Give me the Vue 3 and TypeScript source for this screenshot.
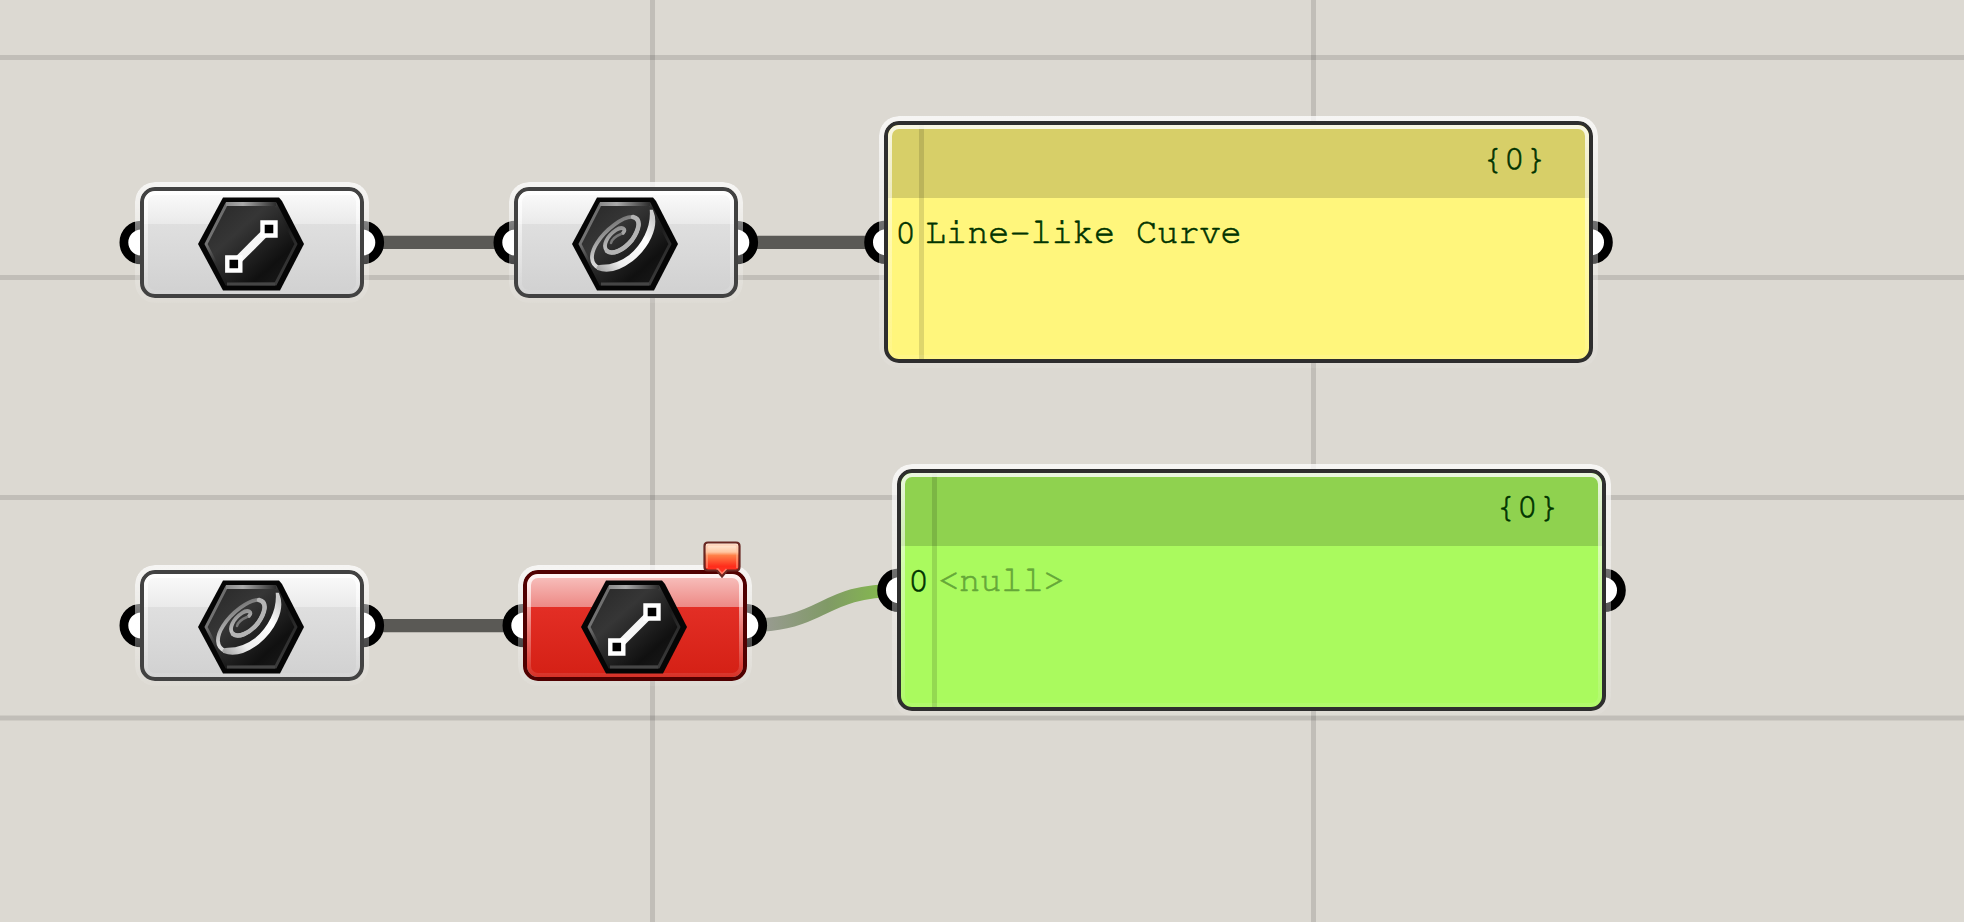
<script setup lang="ts">
interface Port { x: number; y: number }
interface ParamNode { x: number; y: number; icon: 'line' | 'curve'; error: boolean }
interface Panel { x: number; y: number; tone: 'yellow' | 'green'; path: string; index: number; value: string; empty: boolean }

const verticals: number[] = [650, 1311]
const horizontals: number[] = [55, 275, 495, 715.5]

const nodes: ParamNode[] = [
  { x: 140, y: 187, icon: 'line', error: false },
  { x: 514, y: 187, icon: 'curve', error: false },
  { x: 140, y: 570, icon: 'curve', error: false },
  { x: 523, y: 570, icon: 'line', error: true },
]
const panels: Panel[] = [
  { x: 884, y: 121, tone: 'yellow', path: '{0}', index: 0, value: 'Line-like Curve', empty: false },
  { x: 897, y: 469, tone: 'green', path: '{0}', index: 0, value: '<null>', empty: true },
]
const ports: Port[] = [
  ...nodes.flatMap((n) => [{ x: n.x + 1.3, y: n.y + 55.5 }, { x: n.x + 222.3, y: n.y + 55.5 }]),
  ...panels.flatMap((p) => [{ x: p.x + 2, y: p.y + 121.3 }, { x: p.x + 707, y: p.y + 121.3 }]),
]
const at = (item: Port) => ({ left: item.x + 'px', top: item.y + 'px' })
</script>

<template>
  <main class="canvas">
    <svg class="wires" width="1964" height="922" viewBox="0 0 1964 922">
      <defs>
        <linearGradient id="wire" gradientUnits="userSpaceOnUse" x1="766" y1="0" x2="878" y2="0">
          <stop offset="0" stop-color="#989b90" />
          <stop offset="0.55" stop-color="#809a66" />
          <stop offset="1" stop-color="#84b650" />
        </linearGradient>
        <linearGradient id="hexFill" x1="0" y1="0" x2="1" y2="1">
          <stop offset="0.1" stop-color="#2b2b2b" />
          <stop offset="0.35" stop-color="#363636" />
          <stop offset="0.75" stop-color="#101010" />
          <stop offset="1" stop-color="#1c1c1c" />
        </linearGradient>
        <linearGradient id="bevel" x1="0" y1="0" x2="1" y2="1">
          <stop offset="0" stop-color="#666" />
          <stop offset="0.25" stop-color="#747474" />
          <stop offset="0.42" stop-color="#303030" />
          <stop offset="0.6" stop-color="#1c1c1c" />
          <stop offset="1" stop-color="#464646" />
        </linearGradient>
        <linearGradient id="topShine" gradientUnits="userSpaceOnUse" x1="27" y1="0" x2="78" y2="0">
          <stop offset="0" stop-color="#888" />
          <stop offset="0.35" stop-color="#aaa" />
          <stop offset="1" stop-color="#2c2c2c" />
        </linearGradient>
        <linearGradient id="swirlOuter" gradientUnits="userSpaceOnUse" x1="20" y1="70" x2="80" y2="20">
          <stop offset="0" stop-color="#999" />
          <stop offset="0.3" stop-color="#eee" />
          <stop offset="0.75" stop-color="#fff" />
          <stop offset="1" stop-color="#ccc" />
        </linearGradient>
        <linearGradient id="swirlInner" gradientUnits="userSpaceOnUse" x1="40" y1="25" x2="52" y2="52">
          <stop offset="0" stop-color="#777" />
          <stop offset="1" stop-color="#d8d8d8" />
        </linearGradient>
        <linearGradient id="balloon" x1="0" y1="0" x2="0" y2="1">
          <stop offset="0" stop-color="#fff2e4" />
          <stop offset="0.28" stop-color="#ffc7a2" />
          <stop offset="0.38" stop-color="#ff8048" />
          <stop offset="0.7" stop-color="#ff2d1b" />
          <stop offset="1" stop-color="#ff3a30" />
        </linearGradient>
      </defs>
      <g fill="#000" fill-opacity="0.12">
        <rect v-for="x in verticals" :key="'v' + x" :x="x" y="0" width="5" height="922" />
        <rect v-for="y in horizontals" :key="'h' + y" x="0" :y="y" width="1964" height="5" />
      </g>
      <g fill="none" stroke="#5a5955" stroke-width="13.3">
        <path d="M362 242.3H515M736 242.3H886M362 625.6H524" />
        <path d="M745 625.6C828 625.6 818 590.3 899 590.3" stroke="url(#wire)" />
      </g>
      <g fill="#fff" stroke="#000" stroke-width="8.8">
        <circle v-for="(p, i) in ports" :key="i" :cx="p.x" :cy="p.y" r="17.4" />
      </g>
    </svg>

    <section v-for="(n, i) in nodes" :key="i" class="capsule node" :class="{ error: n.error }" :style="at(n)">
      <svg class="icon" width="106" height="94" viewBox="0 0 106 94">
        <path d="M25 .5H81L84 4L106 47L82 93.5H25L0 47Z" fill="#050505" />
        <path d="M28.500 7H77.500L98 47L77.500 87H28.500L8 47Z" fill="url(#hexFill)" stroke="url(#bevel)" stroke-width="2.8" />
        <path d="M28 7H78" stroke="url(#topShine)" stroke-width="4" />
        <path d="M29 87H77" stroke="#454545" stroke-width="3" />
        <template v-if="n.icon === 'line'">
          <path d="M39 64L68 35" stroke="#f6f6f6" stroke-width="8" />
          <path d="M29.300 60.500h13v13h-13zM64.500 25.500h13v13h-13z" fill="#000" stroke="#fff" stroke-width="4.400" />
        </template>
        <g v-else fill="none" stroke-linecap="round">
          <path
            d="M27 71C18 67 18 57 25 46C33 33 51 19 61 20C70 22 67 33 60 43C51 54 40 58 35 54C30 49 35 39 44 33C50 29 55 32 51 36"
            stroke="url(#swirlInner)"
            stroke-width="3.800"
          />
          <path d="M61 20C70 22 67 33 60 43C51 54 40 58 35 54" stroke="#b4b4b4" stroke-width="4.500" />
          <path d="M39 46C40 42 44 39 49 37" stroke="#777" stroke-width="2.500" />
          <path
            d="M80 14C87 30 75 51 60 63C48 72 36 76 26 72C25 70 27 69 30 69C39 69 49 66 58 59C71 48 80 31 79 14Z"
            fill="url(#swirlOuter)"
            stroke="url(#swirlOuter)"
            stroke-width="2.400"
          />
        </g>
      </svg>
      <svg v-if="n.error" class="balloon" width="38" height="38" viewBox="0 0 38 38">
        <path d="M5 1.500H33Q36.500 1.500 36.500 5V26Q36.500 29.500 33 29.500H24L19 35.500L14 29.500H5Q1.500 29.500 1.500 26V5Q1.500 1.500 5 1.500Z" fill="url(#balloon)" stroke="#692722" stroke-width="2.2" />
        <path d="M4 27V6Q4 4 6 4H32Q34 4 34 6V27M13.500 28H15L19 32.500L23.500 28" fill="none" stroke="#ffc0a0" stroke-opacity="0.55" stroke-width="1.500" />
      </svg>
    </section>

    <section v-for="p in panels" :key="p.tone" class="capsule panel" :class="p.tone" :style="at(p)">
      <header class="path">{{ p.path }}</header>
      <div class="row">
        <span class="index">{{ p.index }}</span>
        <span class="value" :class="{ empty: p.empty }">{{ p.value }}</span>
      </div>
    </section>
  </main>
</template>

<style>
body {
  margin: 0;
}
</style>

<style scoped>
.canvas {
  position: relative;
  width: 1964px;
  height: 922px;
  overflow: hidden;
  background: #dcd9d2;
}
.wires {
  display: block;
}
.capsule {
  position: absolute;
  box-sizing: border-box;
  border: 4px solid #424242;
  border-radius: 15px;
}
.capsule::before {
  content: '';
  position: absolute;
  inset: -9px;
  padding: 5px;
  border-radius: 20px;
  background: linear-gradient(rgba(255, 255, 255, 0.75), rgba(255, 255, 255, 0.42) 45%, rgba(255, 255, 255, 0.08));
  mask: linear-gradient(#000 0 0) content-box exclude, linear-gradient(#000 0 0);
}
.capsule::after {
  content: '';
  position: absolute;
  inset: 0;
  padding: 4px;
  border-radius: 11px;
  background: linear-gradient(rgba(255, 255, 255, 0.82), rgba(255, 255, 255, 0.4) 50%, rgba(255, 255, 255, 0.08));
  mask: linear-gradient(#000 0 0) content-box exclude, linear-gradient(#000 0 0);
  pointer-events: none;
}
.node {
  display: flex;
  justify-content: center;
  align-items: center;
  width: 224px;
  height: 110.500px;
  background: linear-gradient(#fbfbfb, #eaeaea 32%, #dfdfdf 32%, #d1d1d1) padding-box;
}
.icon {
  position: relative;
  z-index: 1;
  flex: none;
  margin: 4px 1.500px 0 0;
}
.node.error {
  border-color: #500000;
  background: linear-gradient(#f8c3c0, #ed8985 32%, #e32e25 32%, #d42015) padding-box;
}
.balloon {
  position: absolute;
  z-index: 2;
  left: 176px;
  top: -33px;
}
.panel {
  width: 709px;
  height: 242px;
  border-color: #2e2e2e;
  font: 35.200px 'FreeMono', 'TeX Gyre Cursor', 'Liberation Mono', monospace;
  color: #003300;
  -webkit-text-stroke: 0.6px currentColor;
}
.panel.yellow {
  background: #fff67c;
}
.panel.green {
  background: #aafa5e;
}
.path {
  box-sizing: border-box;
  height: 73px;
  padding: 13px 43px 0 0;
  border-radius: 11px 11px 0 0;
  background: rgba(0, 0, 0, 0.155);
  text-align: right;
  line-height: 42px;
}
.row {
  display: flex;
  padding: 14px 0 0 7px;
  line-height: 42px;
}
.index {
  width: 30px;
}
.empty {
  color: #65a738;
}
/* Divider between the item index and its value, spanning header and body. */
.path::before {
  content: '';
  position: absolute;
  top: 0;
  bottom: 0;
  left: 31px;
  width: 5px;
  background: rgba(0, 0, 0, 0.13);
}
</style>
